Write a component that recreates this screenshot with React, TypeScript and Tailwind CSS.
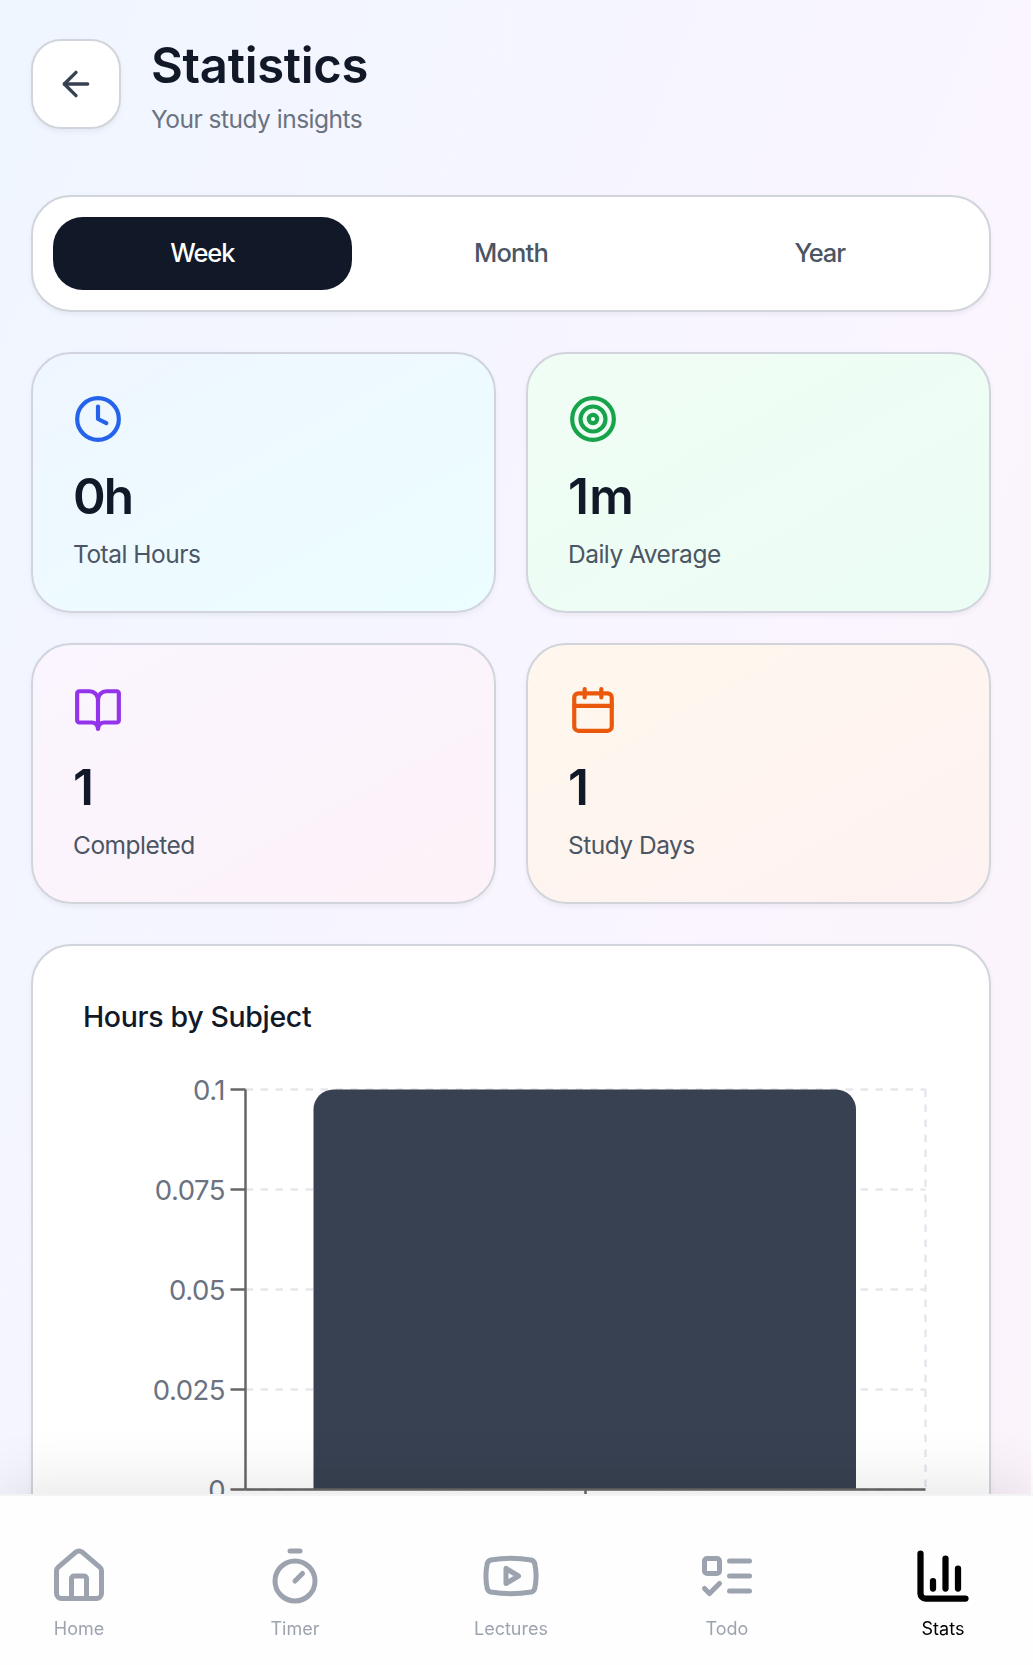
import React, { useState } from "react";
import { ArrowLeft, BookOpen, Calendar, ChartColumn, Clock, House, Target, Timer } from "lucide-react";
import { clsx } from "clsx";

type IconProps = { className?: string; strokeWidth?: number };

const YoutubeIcon: React.FC<IconProps> = ({ className, strokeWidth = 2 }) => (
  <svg viewBox="0 0 24 24" fill="none" stroke="currentColor" strokeWidth={strokeWidth} strokeLinecap="round" strokeLinejoin="round" className={className}>
    <path d="M2.5 17a24.12 24.12 0 0 1 0-10 2 2 0 0 1 1.4-1.4 49.56 49.56 0 0 1 16.2 0A2 2 0 0 1 21.5 7a24.12 24.12 0 0 1 0 10 2 2 0 0 1-1.4 1.4 49.55 49.55 0 0 1-16.2 0A2 2 0 0 1 2.5 17" />
    <path d="m10 15 5-3-5-3z" />
  </svg>
);

const TodoIcon: React.FC<IconProps> = ({ className, strokeWidth = 2 }) => (
  <svg viewBox="0 0 24 24" fill="none" stroke="currentColor" strokeWidth={strokeWidth} strokeLinecap="round" strokeLinejoin="round" className={className}>
    <rect x="3" y="5" width="6" height="6" rx="1" />
    <path d="m3 17 2 2 4-4" />
    <path d="M13 6h8" />
    <path d="M13 12h8" />
    <path d="M13 18h8" />
  </svg>
);

const periods = [
  { label: "Week", className: "tracking-[-1.1px]" },
  { label: "Month", className: "tracking-[-0.8px]" },
  { label: "Year", className: "tracking-[-1.2px]" },
];

const stats = [
  { icon: Clock, value: "0h", label: "Total Hours", bg: "from-[#eff6ff] to-[#ecfeff]", color: "text-[#2563eb]", tracking: "tracking-[-2px]" },
  { icon: Target, value: "1m", label: "Daily Average", bg: "from-[#f0fdf4] to-[#ecfdf5]", color: "text-[#16a34a]", tracking: "tracking-[0.3px]" },
  { icon: BookOpen, value: "1", label: "Completed", bg: "from-[#faf5ff] to-[#fdf2f8]", color: "text-[#9333ea]", tracking: "tracking-normal" },
  { icon: Calendar, value: "1", label: "Study Days", bg: "from-[#fff7ed] to-[#fef2f2]", color: "text-[#ea580c]", tracking: "tracking-normal" },
];

const navItems = [
  { icon: House, label: "Home" },
  { icon: Timer, label: "Timer" },
  { icon: YoutubeIcon, label: "Lectures" },
  { icon: TodoIcon, label: "Todo" },
  { icon: ChartColumn, label: "Stats" },
];

const ticks = ["0.1", "0.075", "0.05", "0.025", "0"];

const SubjectChart = () => {
  const left = 162.5;
  const right = 842.5;
  const top = 32.5;
  const bottom = 432.5;
  return (
    <svg width="856" height="520" viewBox="0 0 856 520" className="block">
      <g stroke="#e5e7eb" strokeWidth="2.5" strokeDasharray="7.5 7.5">
        {ticks.map((tick, i) => (
          <line key={tick} x1={left} x2={right} y1={top + i * 100} y2={top + i * 100} />
        ))}
        <line x1={right} x2={right} y1={top} y2={bottom} />
      </g>
      <path d="M230.5 432.5V52.5a20 20 0 0 1 20-20h502.5a20 20 0 0 1 20 20v380z" fill="#374151" />
      <g stroke="#666" strokeWidth="2.5">
        <line x1={left} x2={left} y1={top} y2={bottom} />
        <line x1={left} x2={right} y1={bottom} y2={bottom} />
        <line x1="502.5" x2="502.5" y1={bottom} y2={bottom + 15} />
        {ticks.map((tick, i) => (
          <line key={tick} x1={left - 15} x2={left} y1={top + i * 100} y2={top + i * 100} />
        ))}
      </g>
      <g fill="#6b7280" className="text-[27.5px] tracking-[-0.5px]">
        {ticks.map((tick, i) => (
          <text key={tick} x={left - 20.5} y={top + i * 100 + 10} textAnchor="end">
            {tick}
          </text>
        ))}
      </g>
    </svg>
  );
};

export default function App() {
  const [period, setPeriod] = useState("Week");

  return (
    <div className="h-[1665px] w-[1033px] overflow-hidden bg-white font-['Inter',sans-serif]">
      <div className="h-[2600px] w-[1031px] bg-linear-to-br from-[#eff6ff] via-[#faf5ff] to-[#fdf2f8] pt-[39px] pl-[31px]">
        <div className="w-[960px]">
          <header className="flex h-[156px] items-start gap-[30px]">
            <button className="flex size-[90px] items-center justify-center rounded-[30px] border-2 border-[#d1d5db] bg-white text-[#374151] shadow-[0_2.5px_5px_rgba(0,0,0,0.05)]">
              <ArrowLeft className="size-10" />
            </button>
            <div>
              <h1 className="text-[49px] leading-[54px] font-semibold tracking-[-0.3px] text-[#111827]">Statistics</h1>
              <p className="mt-[9px] text-[24.5px] leading-[34px] tracking-[-0.5px] text-[#6b7280]">Your study insights</p>
            </div>
          </header>

          <div className="grid h-[117px] grid-cols-3 gap-[10px] rounded-[40px] border-2 border-[#d1d5db] bg-white p-5 shadow-[0_2.5px_5px_rgba(0,0,0,0.05)]">
            {periods.map((p) => (
              <button
                key={p.label}
                onClick={() => setPeriod(p.label)}
                className={clsx(
                  "rounded-[30px] text-[25.5px] font-medium",
                  p.className,
                  period === p.label ? "bg-[#111827] text-white" : "text-[#4b5563]"
                )}
              >
                {p.label}
              </button>
            ))}
          </div>

          <div className="mt-10 grid grid-cols-2 gap-[30px]">
            {stats.map(({ icon: Icon, value, label, bg, color, tracking }) => (
              <div key={label} className={clsx("h-[261px] rounded-[40px] border-2 border-[#d1d5db] bg-linear-to-br p-10 shadow-[0_2.5px_5px_rgba(0,0,0,0.05)]", bg)}>
                <Icon className={clsx("size-[50px]", color)} />
                <div className={clsx("mt-[22px] text-[49.5px] leading-[60px] font-semibold text-[#111827]", tracking)}>{value}</div>
                <div className="mt-[10px] text-[24.5px] leading-[36px] tracking-[-0.5px] text-[#4b5563]">{label}</div>
              </div>
            ))}
          </div>

          <section className="mt-10 h-[700px] rounded-[40px] border-2 border-[#d1d5db] bg-white px-[50px] pt-[50px] shadow-[0_2.5px_5px_rgba(0,0,0,0.05)]">
            <h2 className="mb-[19px] text-[28.5px] leading-[42px] font-medium tracking-[-0.35px] text-[#111827]">Hours by Subject</h2>
            <SubjectChart />
          </section>
        </div>
      </div>

      <nav className="fixed bottom-0 left-0 flex h-[171px] w-[1033px] justify-between border-t-2 border-[#f3f4f6] bg-[#fefefe] pt-[50px] pr-[30px] pl-[19px] shadow-[0_-10px_60px_rgba(0,0,0,0.1)]">
        {navItems.map(({ icon: Icon, label }) => {
          const active = label === "Stats";
          return (
            <button key={label} className={clsx("flex w-[120px] flex-col items-center", active ? "text-black" : "text-[#9ca3af]")}>
              <Icon className="size-[60px]" strokeWidth={active ? 2.5 : 2} />
              <span className="mt-[10px] text-[18px] leading-[25px]">{label}</span>
            </button>
          );
        })}
      </nav>
    </div>
  );
}
